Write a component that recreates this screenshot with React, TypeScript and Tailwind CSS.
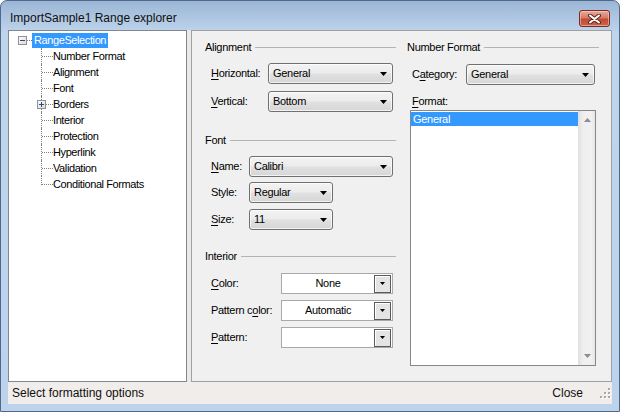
import React from 'react';

const Arrow = () => (
  <svg width="7" height="4" viewBox="0 0 7 4">
    <path d="M0 0h7L3.5 4z" fill="#000" />
  </svg>
);

const Combo = ({ text, w }: { text: string; w: string }) => (
  <div
    className={`${w} h-[21px] flex items-center justify-between rounded-[3px] border border-[#707070] bg-[linear-gradient(to_bottom,#f3f3f3_0%,#ececec_45%,#e0e0e0_55%,#d6d6d6_100%)] pl-[4px] pr-[5px] shadow-[inset_0_0_0_1px_rgba(255,255,255,0.7)]`}
  >
    <span className="leading-[13px]">{text}</span>
    <Arrow />
  </div>
);

const ColorBox = ({ text }: { text: string }) => (
  <div className="w-[112px] h-[21px] flex items-center border border-[#a9a9a9] bg-white">
    <span className="flex-1 text-center leading-[13px]">{text}</span>
    <div className="w-[17px] h-[18px] mr-[1px] flex items-center justify-center border border-[#5a5a5a] bg-[#e4e4e4] shadow-[inset_1px_1px_0_#ffffff]">
      <svg width="5" height="3" viewBox="0 0 5 3">
        <path d="M0 0h5L2.5 3z" fill="#000" />
      </svg>
    </div>
  </div>
);

const GroupHeader = ({ title }: { title: string }) => (
  <div className="flex items-center h-[13px] gap-[4px]">
    <span className="leading-[13px]">{title}</span>
    <div className="flex-1 h-px bg-[#b4b4b4]" />
  </div>
);

const TreeBox = ({ plus }: { plus?: boolean }) => (
  <svg width="9" height="9" viewBox="0 0 9 9">
    <defs>
      <linearGradient id={plus ? 'gp' : 'gm'} x1="0" y1="0" x2="1" y2="1">
        <stop offset="0" stopColor="#ffffff" />
        <stop offset="1" stopColor="#d8d8d8" />
      </linearGradient>
    </defs>
    <rect x="0.5" y="0.5" width="8" height="8" fill={`url(#${plus ? 'gp' : 'gm'})`} stroke="#919191" />
    <path d="M2 4.5h5" stroke="#2c4a7e" />
    {plus && <path d="M4.5 2v5" stroke="#2c4a7e" />}
  </svg>
);

const children = [
  'Number Format',
  'Alignment',
  'Font',
  'Borders',
  'Interior',
  'Protection',
  'Hyperlink',
  'Validation',
  'Conditional Formats',
];

const Tree = () => (
  <div className="w-[179px] border border-[#828790] bg-white pt-[1px] tracking-[-0.4px]">
    <div className="h-[16px] flex items-center">
      <div className="w-[9px]" />
      <TreeBox />
      <div className="w-[5px] border-t border-dotted border-[#808080]" />
      <span className="h-[15px] leading-[15px] px-[2px] bg-[#3399ff] text-white">RangeSelection</span>
    </div>
    {children.map((c, i) => (
      <div key={c} className="h-[16px] flex items-center">
        <div className="relative w-[44px] h-full">
          <div
            className={`absolute left-[32px] top-0 border-l border-dotted border-[#808080] ${
              i === children.length - 1 ? 'h-[9px]' : 'h-[16px]'
            }`}
          />
          <div className="absolute left-[33px] top-[8px] w-[11px] border-t border-dotted border-[#808080]" />
          {c === 'Borders' && (
            <div className="absolute left-[28px] top-[4px] flex">
              <TreeBox plus />
            </div>
          )}
        </div>
        <span className="leading-[13px]">{c}</span>
      </div>
    ))}
  </div>
);

const Label = ({ w, children }: { w: string; children: React.ReactNode }) => (
  <div className={`${w} leading-[13px]`}>{children}</div>
);

const U = ({ children }: { children: React.ReactNode }) => (
  <span className="underline underline-offset-[2px]">{children}</span>
);

const CloseX = () => (
  <svg width="13" height="10" viewBox="0 0 13 10">
    <path d="M2 1.5L11 8.5M11 1.5L2 8.5" stroke="#5a2a22" strokeWidth="4" strokeLinecap="round" />
    <path d="M2 1.5L11 8.5M11 1.5L2 8.5" stroke="#ffffff" strokeWidth="2" strokeLinecap="round" />
  </svg>
);

const Grip = () => (
  <svg width="12" height="12" viewBox="0 0 12 12">
    {[
      [9, 1],
      [9, 5],
      [5, 5],
      [9, 9],
      [5, 9],
      [1, 9],
    ].map(([x, y]) => (
      <g key={`${x}-${y}`}>
        <rect x={x + 1} y={y + 1} width="2" height="2" fill="#ffffff" />
        <rect x={x} y={y} width="2" height="2" fill="#a8a8a8" />
      </g>
    ))}
  </svg>
);

export default function App() {
  return (
    <div className="w-[620px] h-[412px] flex flex-col overflow-hidden rounded-t-[7px] border border-[#50698a] bg-[linear-gradient(to_bottom,#9bb6d6_0px,#b4cbe5_22px,#bfd5ec_32px,#bcd3eb_100%)] font-['Liberation_Sans',Arial,sans-serif] text-black">
      {/* title bar */}
      <div className="h-[29px] flex items-start pt-[9px] pl-[9px] pr-[9px]">
        <span className="text-[12px] leading-[16px] text-[#101010]">ImportSample1 Range explorer</span>
        <div className="ml-auto w-[31px] h-[17px] flex items-center justify-center rounded-[3px] border border-[#7b2b20] bg-[linear-gradient(to_bottom,#e8aa9d_0%,#d57b69_45%,#c34a33_55%,#cc6247_100%)] shadow-[inset_0_0_0_1px_rgba(255,220,210,0.5)]">
          <CloseX />
        </div>
      </div>

      <div className="px-[7px] flex flex-col">
        {/* body */}
        <div className="h-[352px] flex gap-[4px] bg-[#e9e9e9] text-[11px]">
          <Tree />

          <div className="flex-1 border border-[#a0a0a0] bg-[#f0f0f0] flex pl-[13px] pr-[12px] pt-[10px] gap-[11px] tracking-[-0.3px]">
            {/* left column */}
            <div className="w-[191px] flex flex-col">
              <GroupHeader title="Alignment" />
              <div className="mt-[9px] flex items-center pl-[6px]">
                <Label w="w-[57px]">
                  <U>H</U>orizontal:
                </Label>
                <Combo text="General" w="w-[125px]" />
              </div>
              <div className="mt-[7px] flex items-center pl-[6px]">
                <Label w="w-[57px]">
                  <U>V</U>ertical:
                </Label>
                <Combo text="Bottom" w="w-[125px]" />
              </div>

              <div className="mt-[22px]">
                <GroupHeader title="Font" />
              </div>
              <div className="mt-[9px] flex items-center pl-[6px]">
                <Label w="w-[38px]">
                  <U>N</U>ame:
                </Label>
                <Combo text="Calibri" w="w-[144px]" />
              </div>
              <div className="mt-[5px] flex items-center pl-[6px]">
                <Label w="w-[38px]">Style:</Label>
                <Combo text="Regular" w="w-[84px]" />
              </div>
              <div className="mt-[6px] flex items-center pl-[6px]">
                <Label w="w-[38px]">
                  <U>S</U>ize:
                </Label>
                <Combo text="11" w="w-[84px]" />
              </div>

              <div className="mt-[20px]">
                <GroupHeader title="Interior" />
              </div>
              <div className="mt-[10px] flex items-center pl-[6px]">
                <Label w="w-[70px]">
                  <U>C</U>olor:
                </Label>
                <ColorBox text="None" />
              </div>
              <div className="mt-[6px] flex items-center pl-[6px]">
                <Label w="w-[70px]">
                  Pattern c<U>o</U>lor:
                </Label>
                <ColorBox text="Automatic" />
              </div>
              <div className="mt-[6px] flex items-center pl-[6px]">
                <Label w="w-[70px]">
                  <U>P</U>attern:
                </Label>
                <ColorBox text="" />
              </div>
            </div>

            {/* right column */}
            <div className="flex-1 flex flex-col">
              <GroupHeader title="Number Format" />
              <div className="mt-[10px] flex items-center pl-[5px]">
                <Label w="w-[54px]">
                  C<U>a</U>tegory:
                </Label>
                <Combo text="General" w="w-[129px]" />
              </div>
              <div className="mt-[10px] pl-[5px] h-[13px] leading-[13px]">
                <U>F</U>ormat:
              </div>
              <div className="mt-[2px] ml-[3px] w-[186px] h-[256px] flex border border-[#828790] bg-white">
                <div className="flex-1 pt-[1px]">
                  <div className="h-[14px] leading-[14px] pl-[2px] bg-[#3399ff] text-white">General</div>
                </div>
                <div className="w-[17px] flex flex-col items-center justify-between py-[7px] bg-[linear-gradient(to_right,#e2e2e2,#efefef_25%,#f1f1f1_75%,#e6e6e6)] border-l border-[#e0e0e0]">
                  <svg width="7" height="4" viewBox="0 0 7 4">
                    <path d="M3.5 0L7 4H0z" fill="#8c8c8c" />
                  </svg>
                  <svg width="7" height="4" viewBox="0 0 7 4">
                    <path d="M0 0h7L3.5 4z" fill="#8c8c8c" />
                  </svg>
                </div>
              </div>
            </div>
          </div>
        </div>

        {/* status bar */}
        <div className="h-[22px] flex items-center bg-[#f0edeb] pl-[4px] text-[12px] text-[#101010]">
          <span>Select formatting options</span>
          <span className="ml-auto">Close</span>
          <div className="ml-[16px] mr-[1px] flex">
            <Grip />
          </div>
        </div>
      </div>
    </div>
  );
}
